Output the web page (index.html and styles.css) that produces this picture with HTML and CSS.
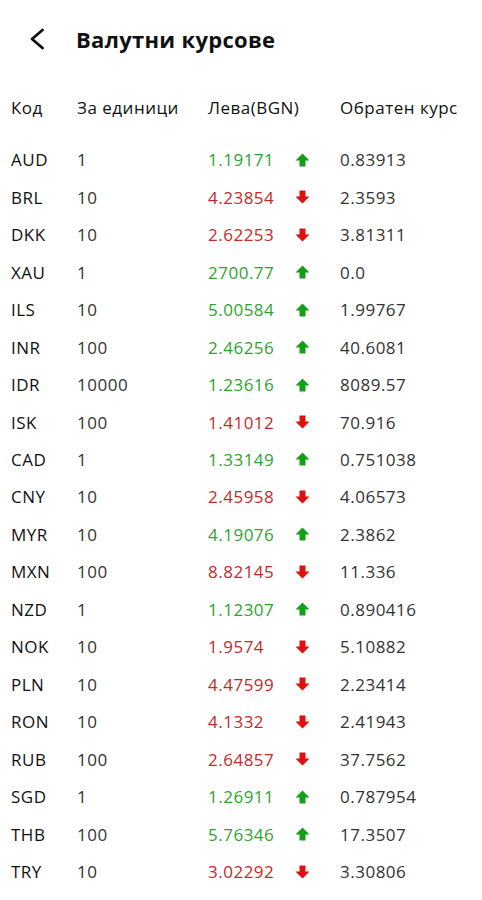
FILE: index.html
```html
<!DOCTYPE html>
<html lang="bg">
<head>
    <meta charset="UTF-8">
    <meta name="viewport" content="width=device-width, initial-scale=1.0">
    <title>Валутни курсове</title>
    <link rel="stylesheet" href="styles.css">
</head>
<body>

    <div class="topbar">
        <svg class="back" width="24" height="24" viewBox="0 0 24 24"><path d="M16.5 3 L6 12 L16.5 21" fill="none" stroke="#111" stroke-width="2.8" stroke-linecap="round" stroke-linejoin="round"/></svg>
        <h1>Валутни курсове</h1>
    </div>

    <div class="rates">
        <div class="row head">
            <span>Код</span>
            <span>За единици</span>
            <span>Лева(BGN)</span>
            <span></span>
            <span>Обратен курс</span>
        </div>
        <div id="rows"></div>
    </div>

    <script>
        const data = [
            ["AUD", "1", "1.19171", 1, "0.83913"],
            ["BRL", "10", "4.23854", 0, "2.3593"],
            ["DKK", "10", "2.62253", 0, "3.81311"],
            ["XAU", "1", "2700.77", 1, "0.0"],
            ["ILS", "10", "5.00584", 1, "1.99767"],
            ["INR", "100", "2.46256", 1, "40.6081"],
            ["IDR", "10000", "1.23616", 1, "8089.57"],
            ["ISK", "100", "1.41012", 0, "70.916"],
            ["CAD", "1", "1.33149", 1, "0.751038"],
            ["CNY", "10", "2.45958", 0, "4.06573"],
            ["MYR", "10", "4.19076", 1, "2.3862"],
            ["MXN", "100", "8.82145", 0, "11.336"],
            ["NZD", "1", "1.12307", 1, "0.890416"],
            ["NOK", "10", "1.9574", 0, "5.10882"],
            ["PLN", "10", "4.47599", 0, "2.23414"],
            ["RON", "10", "4.1332", 0, "2.41943"],
            ["RUB", "100", "2.64857", 0, "37.7562"],
            ["SGD", "1", "1.26911", 1, "0.787954"],
            ["THB", "100", "5.76346", 1, "17.3507"],
            ["TRY", "10", "3.02292", 0, "3.30806"]
        ];

        const up = '<svg width="15" height="14" viewBox="0 0 15 14"><path d="M7.5 0.5 L14.5 7.5 L10.5 7.5 L10.5 13.5 L4.5 13.5 L4.5 7.5 L0.5 7.5 Z" fill="#14a014"/></svg>';
        const down = '<svg width="15" height="14" viewBox="0 0 15 14"><path d="M7.5 13.5 L14.5 6.5 L10.5 6.5 L10.5 0.5 L4.5 0.5 L4.5 6.5 L0.5 6.5 Z" fill="#e01010"/></svg>';

        let html = "";
        data.forEach(r => {
            html += `
                <div class="row">
                    <span class="code">${r[0]}</span>
                    <span>${r[1]}</span>
                    <span class="${r[3] ? 'up' : 'down'}">${r[2]}</span>
                    <span class="arrow">${r[3] ? up : down}</span>
                    <span>${r[4]}</span>
                </div>
            `;
        });
        document.getElementById("rows").innerHTML = html;
    </script>

</body>
</html>
```

FILE: styles.css
```css
body { margin: 0; font-family: "Open Sans", "Noto Sans", sans-serif; background: #fff; color: #222; }
.topbar { display: flex; align-items: center; height: 78px; padding-left: 26px; }
.back { margin-right: 26px; }
h1 { margin: 0; font-size: 22px; font-weight: 700; color: #111; letter-spacing: 0.3px; }
.rates { padding: 12px 0 0 11px; }
.row { display: grid; grid-template-columns: 66px 131px 87px 45px 1fr; align-items: center; height: 37.47px; font-size: 17px; letter-spacing: 0.5px; color: #333; }
.row.head { color: #111; height: 51px; align-items: start; padding-top: 6px; box-sizing: border-box; }
.code { color: #111; }
.up { color: #2ea32e; }
.down { color: #c42a2a; }
.arrow { display: flex; align-items: center; }
```
